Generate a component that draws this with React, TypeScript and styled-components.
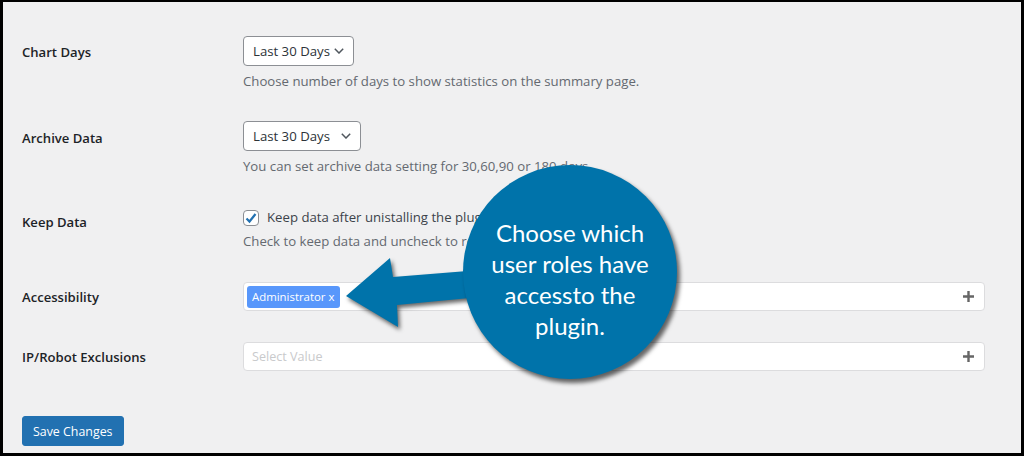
import React from "react";
import styled, { createGlobalStyle } from "styled-components";

const GlobalStyle = createGlobalStyle`
  html, body { margin: 0; padding: 0; background: #000; }
  * { box-sizing: border-box; }
`;

const Chevron = () => (
  <svg width="10" height="6" viewBox="0 0 10 6">
    <polyline points="0.8,0.8 5,5 9.2,0.8" fill="none" stroke="#50575e" strokeWidth="1.5" />
  </svg>
);

const Plus = () => (
  <svg width="11" height="11" viewBox="0 0 11 11">
    <path d="M5.5 0v11M0 5.5h11" stroke="#666" strokeWidth="2.4" />
  </svg>
);

const Check = () => (
  <svg width="14" height="14" viewBox="0 0 14 14">
    <polyline points="2.5,7.5 5.5,10.5 11.5,3" fill="none" stroke="#2271b1" strokeWidth="2.2" />
  </svg>
);

const App = () => {
  return (
    <>
      <GlobalStyle />
      <Frame>
        <Form>
          <Row $pb={16}>
            <Label $offset={7}>Chart Days</Label>
            <Field>
              <Select $width={111}>
                Last 30 Days
                <Chevron />
              </Select>
              <Description $mt={6}>
                Choose number of days to show statistics on the summary page.
              </Description>
            </Field>
          </Row>
          <Row $pb={15}>
            <Label $offset={8}>Archive Data</Label>
            <Field>
              <Select $width={118}>
                Last 30 Days
                <Chevron />
              </Select>
              <Description $mt={6}>
                You can set archive data setting for 30,60,90 or 180 days.
              </Description>
            </Field>
          </Row>
          <Row $pb={17}>
            <Label $offset={8}>Keep Data</Label>
            <Field>
              <CheckLine>
                <CheckBox>
                  <Check />
                </CheckBox>
                Keep data after unistalling the plugin
              </CheckLine>
              <Description $mt={3}>
                Check to keep data and uncheck to remove data after uninstalling.
              </Description>
            </Field>
          </Row>
          <Row $pb={16}>
            <Label $offset={6}>Accessibility</Label>
            <Field>
              <MultiSelect>
                <Tag>Administrator x</Tag>
                <Plus />
              </MultiSelect>
            </Field>
          </Row>
          <Row $pb={0}>
            <Label $offset={6}>IP/Robot Exclusions</Label>
            <Field>
              <MultiSelect>
                <Placeholder>Select Value</Placeholder>
                <Plus />
              </MultiSelect>
            </Field>
          </Row>
          <SaveButton>Save Changes</SaveButton>
        </Form>

        <Arrow width="150" height="80" viewBox="0 0 150 80">
          <polygon points="6,38 50,0 53,19 140,12 140,39 57,47 58,69" fill="#0073aa" />
        </Arrow>
        <Bubble>
          Choose which
          <br />
          user roles have
          <br />
          accessto the
          <br />
          plugin.
        </Bubble>
      </Frame>
    </>
  );
};

export default App;

const Frame = styled.div`
  position: relative;
  width: 1024px;
  height: 456px;
  overflow: hidden;
  background: #f0f0f1;
  border-style: solid;
  border-color: #000;
  border-width: 2px 3px 3px 3px;
  font-family: "Open Sans", "Noto Sans", sans-serif;
  color: #1d2327;
`;

const Form = styled.div`
  padding: 19px 36px 0 19px;
  display: flex;
  flex-direction: column;
`;

const Row = styled.div<{ $pb: number }>`
  display: grid;
  grid-template-columns: 221px 1fr;
  align-items: start;
  padding-top: 15px;
  padding-bottom: ${({ $pb }) => $pb}px;
`;

const Label = styled.div<{ $offset: number }>`
  padding-top: ${({ $offset }) => $offset}px;
  font-size: 13.1px;
  line-height: 18px;
  font-weight: 600;
  color: #1d2327;
`;

const Field = styled.div`
  display: flex;
  flex-direction: column;
  align-items: flex-start;
`;

const Select = styled.div<{ $width: number }>`
  width: ${({ $width }) => $width}px;
  height: 30px;
  display: flex;
  align-items: center;
  justify-content: space-between;
  gap: 4px;
  padding: 0 9px 0 9px;
  background: #fff;
  border: 1px solid #8c8f94;
  border-radius: 4px;
  font-size: 13.2px;
  white-space: nowrap;
  color: #2c3338;

  svg {
    flex-shrink: 0;
  }
`;

const Description = styled.p<{ $mt: number }>`
  margin: ${({ $mt }) => $mt}px 0 0;
  font-size: 13.2px;
  line-height: 18px;
  color: #646970;
  white-space: nowrap;
`;

const CheckLine = styled.label`
  height: 24px;
  display: flex;
  align-items: center;
  gap: 8px;
  font-size: 13.2px;
  color: #3c434a;
  white-space: nowrap;
`;

const CheckBox = styled.span`
  width: 16px;
  height: 16px;
  margin-top: 2px;
  display: flex;
  align-items: center;
  justify-content: center;
  background: #fff;
  border: 1px solid #8c8f94;
  border-radius: 4px;
`;

const MultiSelect = styled.div`
  width: 100%;
  height: 29px;
  display: flex;
  align-items: center;
  justify-content: space-between;
  padding: 0 10px 0 3px;
  background: #fff;
  border: 1px solid #dcdcde;
  border-radius: 4px;
`;

const Tag = styled.span`
  height: 22px;
  padding: 0 6px 0 5px;
  display: flex;
  align-items: center;
  background: #5897fb;
  border-radius: 3px;
  color: #fff;
  font-size: 11.4px;
`;

const Placeholder = styled.span`
  padding-left: 5px;
  font-size: 12.6px;
  color: #c9cacc;
`;

const SaveButton = styled.button`
  align-self: flex-start;
  margin-top: 45px;
  height: 30px;
  padding: 0 10px;
  background: #2271b1;
  border: 1px solid #2271b1;
  border-radius: 3px;
  color: #fff;
  font-family: inherit;
  font-size: 12.4px;
`;

const Arrow = styled.svg`
  position: absolute;
  left: 337px;
  top: 256px;
  filter: drop-shadow(2px 3px 2px rgba(0, 0, 0, 0.6));
`;

const Bubble = styled.div`
  position: absolute;
  left: 460px;
  top: 163px;
  width: 214px;
  height: 214px;
  padding-top: 52px;
  border-radius: 50%;
  background: #0073aa;
  box-shadow: 3px 4px 4px rgba(0, 0, 0, 0.6);
  color: #fff;
  font-family: Lato, "Open Sans", sans-serif;
  font-size: 24px;
  line-height: 31px;
  text-align: center;
`;
